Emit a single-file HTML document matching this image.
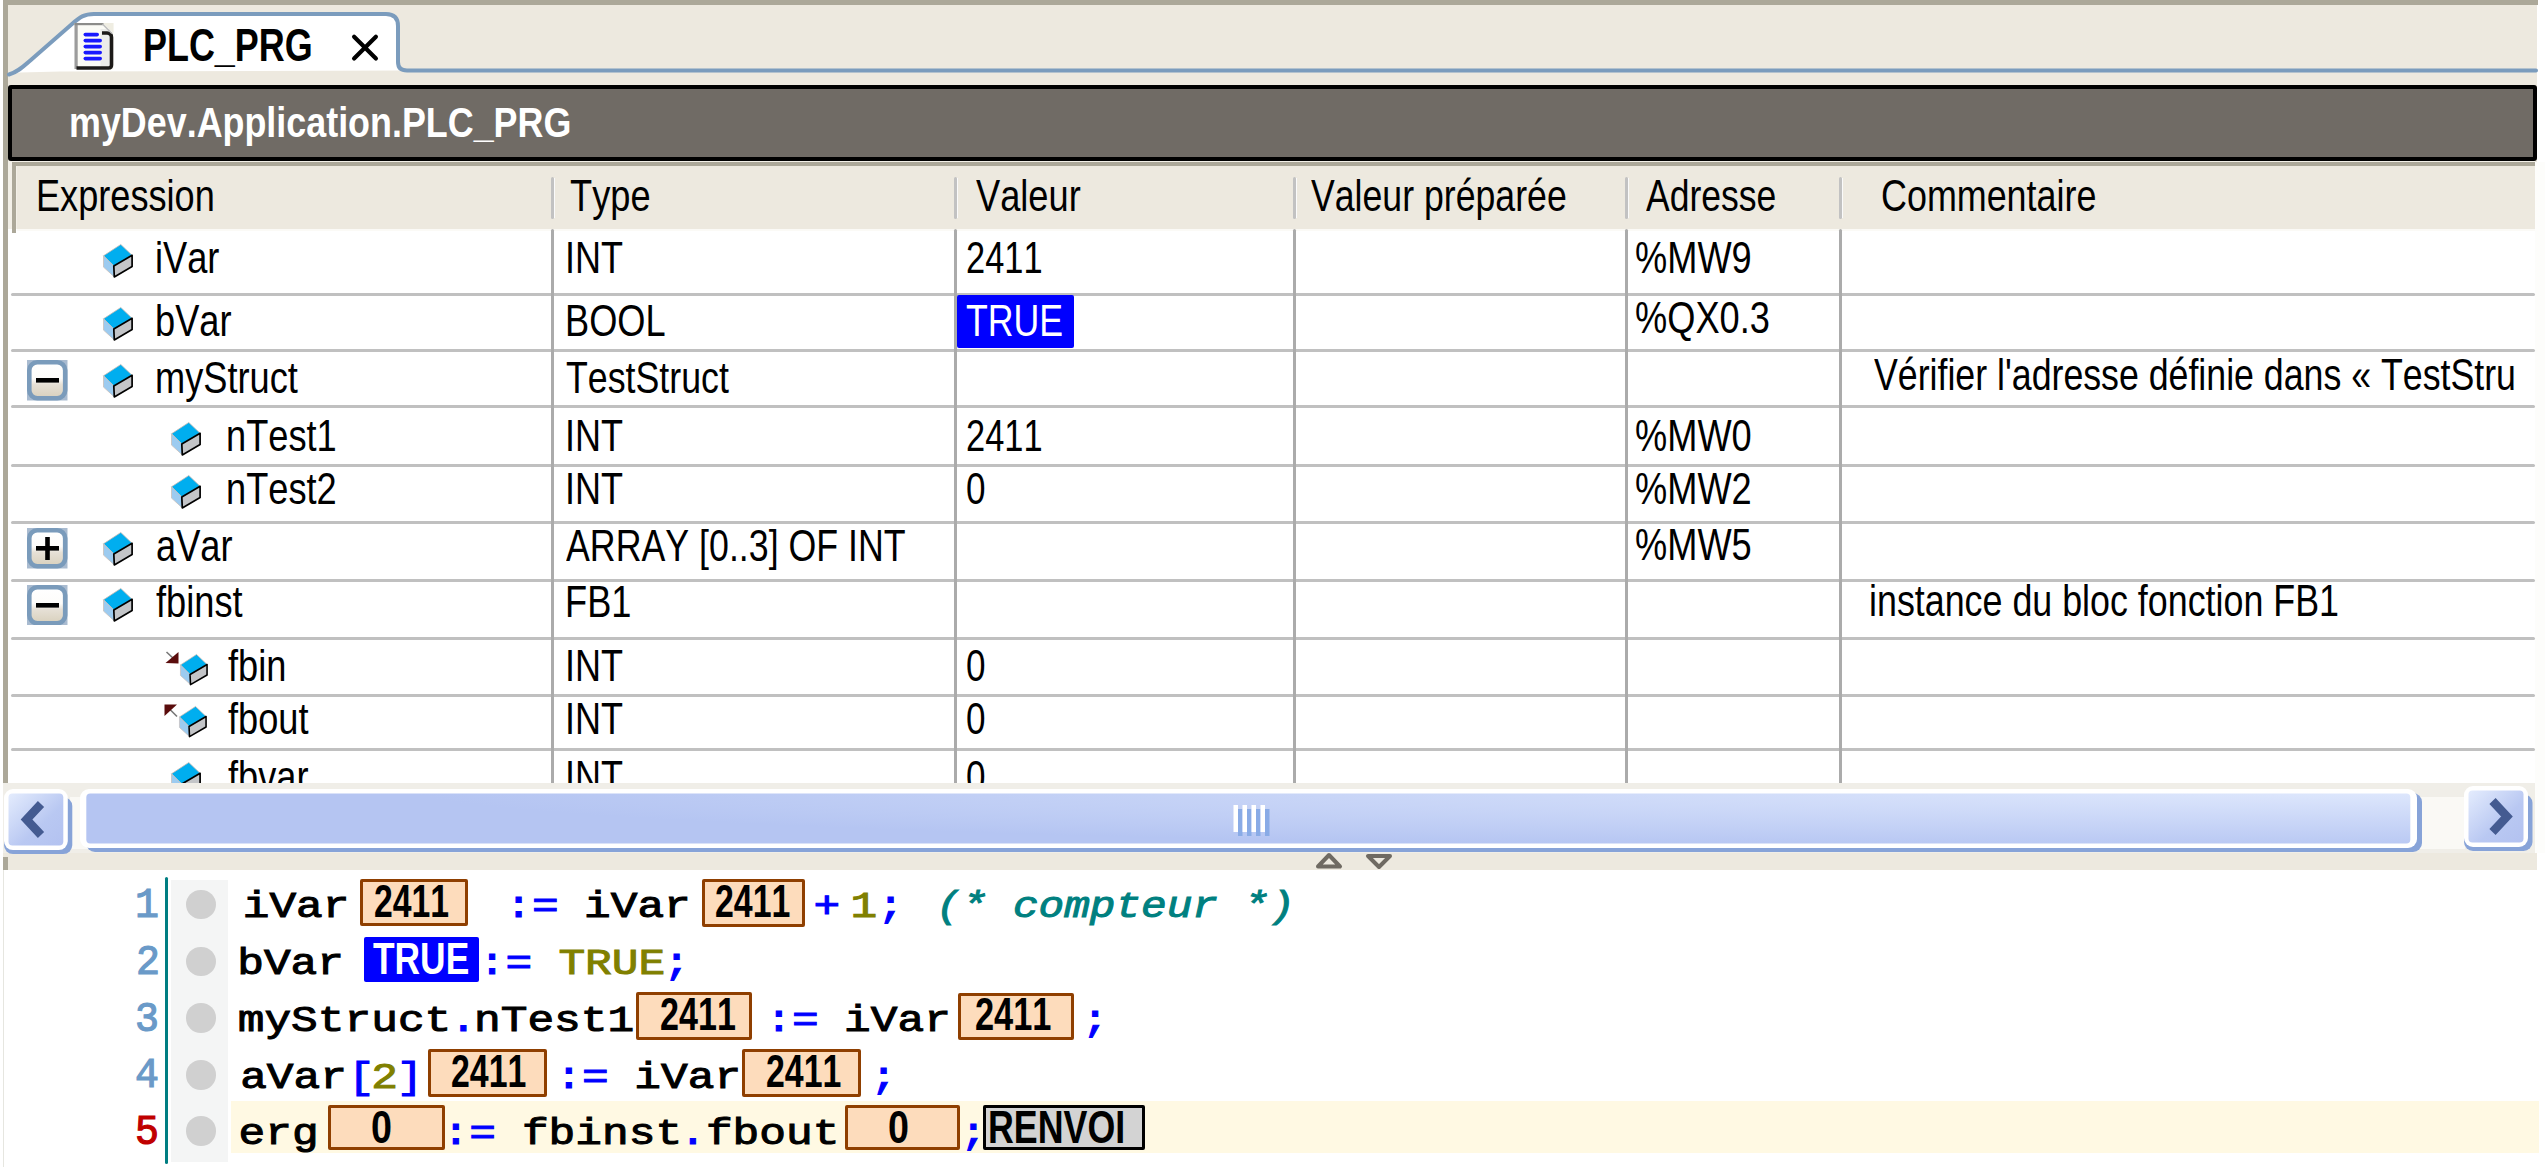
<!DOCTYPE html><html><head><meta charset="utf-8"><style>
html,body{margin:0;padding:0;width:2545px;height:1167px;overflow:hidden;background:#fff}
.t{position:absolute;white-space:pre;font-kerning:none}
</style></head><body>
<div style="position:absolute;left:0px;top:0px;width:2545px;height:1167px;background:#fff;z-index:0;"></div>
<div style="position:absolute;left:3px;top:0px;width:2534px;height:162px;background:#ede9df;z-index:0;"></div>
<div style="position:absolute;left:3px;top:162px;width:2532px;height:708px;background:#ede9df;z-index:0;"></div>
<div style="position:absolute;left:3px;top:0px;width:2535px;height:4.5px;background:#aca899;z-index:1;"></div>
<div style="position:absolute;left:3px;top:0px;width:4.5px;height:783px;background:#aca899;z-index:1;"></div>
<div style="position:absolute;left:3px;top:857px;width:4.5px;height:13px;background:#aca899;z-index:1;"></div>
<svg style="position:absolute;left:0;top:0;z-index:2" width="2545" height="90">
<path d="M9,74.5 C18,72 24,66 32,59 L72,24 C80,17 84,14 94,14 L386,14 Q398,14 398,26 L398,62 Q398,71 408,71 L400,70.6 L60,71.5 L20,72.5 L9,74.5 Z" fill="#fff"/>
<path d="M9,74.5 C18,72 24,66 32,59 L72,24 C80,17 84,14 94,14 L386,14 Q398,14 398,26 L398,62 Q398,70.5 407,70.5 L2536,70.5" fill="none" stroke="#7b9cbd" stroke-width="4" stroke-linecap="round"/>
<g transform="translate(74.5,23)">
 <rect x="0" y="0" width="39" height="46.5" fill="#fbfbf6"/>
 <rect x="26" y="6" width="10" height="38" fill="#ececea"/>
 <path d="M28,0 L39,0 L39,10 Z" fill="#efede2"/>
 <rect x="0" y="0" width="3.2" height="46" fill="#9c9c9c"/>
 <rect x="0" y="0" width="29" height="2.2" fill="#8c8c8a"/>
 <path d="M27.5,10 L32.5,10 Q37,10 37,14.5 L37,42 Q37,45 34,45 L2,45" fill="none" stroke="#1c1a18" stroke-width="3.6"/>
 <path d="M28,1 L37.5,10.5" stroke="#bdbdbd" stroke-width="1.5"/>
 <g fill="#1a1aff"><rect x="9" y="9.8" width="15.5" height="3.6" rx="1.8"/><rect x="9" y="15.8" width="18.5" height="3.6" rx="1.8"/><rect x="9" y="21.8" width="18.5" height="3.6" rx="1.8"/><rect x="9" y="27.8" width="18.5" height="3.6" rx="1.8"/><rect x="9" y="33.8" width="18.5" height="3.6" rx="1.8"/></g>
</g>
<path d="M354.1,36.7 L375.9,58.5 M375.9,36.7 L354.1,58.5" stroke="#000" stroke-width="4.2" stroke-linecap="round"/>
</svg>
<div style="position:absolute;left:7.5px;top:85px;width:2529.5px;height:76px;background:#706b65;z-index:2;border:4px solid #000;box-sizing:border-box;border-radius:3px"></div>
<div style="position:absolute;left:7.5px;top:161px;width:2527.5px;height:72px;background:#f3f0e8;z-index:1;"></div>
<div style="position:absolute;left:11.8px;top:162px;width:2523.2px;height:4.400000000000006px;background:#aca899;z-index:2;"></div>
<div style="position:absolute;left:11.8px;top:162px;width:4.699999999999999px;height:71px;background:#aca899;z-index:2;"></div>
<div style="position:absolute;left:16.5px;top:166.4px;width:2518.5px;height:62.599999999999994px;background:#ede9df;z-index:2;"></div>
<div style="position:absolute;left:551px;top:177px;width:3px;height:42px;background:#c2c2c2;border-radius:1.5px;z-index:3"></div>
<div style="position:absolute;left:554px;top:178px;width:1px;height:40px;background:#fafafa;z-index:3"></div>
<div style="position:absolute;left:954px;top:177px;width:3px;height:42px;background:#c2c2c2;border-radius:1.5px;z-index:3"></div>
<div style="position:absolute;left:957px;top:178px;width:1px;height:40px;background:#fafafa;z-index:3"></div>
<div style="position:absolute;left:1293px;top:177px;width:3px;height:42px;background:#c2c2c2;border-radius:1.5px;z-index:3"></div>
<div style="position:absolute;left:1296px;top:178px;width:1px;height:40px;background:#fafafa;z-index:3"></div>
<div style="position:absolute;left:1625.4px;top:177px;width:3px;height:42px;background:#c2c2c2;border-radius:1.5px;z-index:3"></div>
<div style="position:absolute;left:1628.4px;top:178px;width:1px;height:40px;background:#fafafa;z-index:3"></div>
<div style="position:absolute;left:1838.9px;top:177px;width:3px;height:42px;background:#c2c2c2;border-radius:1.5px;z-index:3"></div>
<div style="position:absolute;left:1841.9px;top:178px;width:1px;height:40px;background:#fafafa;z-index:3"></div>
<div style="position:absolute;left:7.5px;top:229px;width:2527.5px;height:554px;background:#fff;z-index:1;"></div>
<div style="position:absolute;left:16.5px;top:229px;width:2518.5px;height:2px;background:#fbfaf6;z-index:2;"></div>
<div style="position:absolute;left:551px;top:229px;width:3px;height:554px;background:#ababab;border-radius:1.5px 1.5px 0 0;z-index:3"></div>
<div style="position:absolute;left:954px;top:229px;width:3px;height:554px;background:#ababab;border-radius:1.5px 1.5px 0 0;z-index:3"></div>
<div style="position:absolute;left:1293px;top:229px;width:3px;height:554px;background:#ababab;border-radius:1.5px 1.5px 0 0;z-index:3"></div>
<div style="position:absolute;left:1625.4px;top:229px;width:3px;height:554px;background:#ababab;border-radius:1.5px 1.5px 0 0;z-index:3"></div>
<div style="position:absolute;left:1838.9px;top:229px;width:3px;height:554px;background:#ababab;border-radius:1.5px 1.5px 0 0;z-index:3"></div>
<div style="position:absolute;left:11px;top:292.5px;width:2524px;height:3px;background:#c0c0c0;border-radius:1.5px;z-index:2"></div>
<div style="position:absolute;left:11px;top:349px;width:2524px;height:3px;background:#c0c0c0;border-radius:1.5px;z-index:2"></div>
<div style="position:absolute;left:11px;top:405px;width:2524px;height:3px;background:#c0c0c0;border-radius:1.5px;z-index:2"></div>
<div style="position:absolute;left:11px;top:463.5px;width:2524px;height:3px;background:#c0c0c0;border-radius:1.5px;z-index:2"></div>
<div style="position:absolute;left:11px;top:520.5px;width:2524px;height:3px;background:#c0c0c0;border-radius:1.5px;z-index:2"></div>
<div style="position:absolute;left:11px;top:578.5px;width:2524px;height:3px;background:#c0c0c0;border-radius:1.5px;z-index:2"></div>
<div style="position:absolute;left:11px;top:636.5px;width:2524px;height:3px;background:#c0c0c0;border-radius:1.5px;z-index:2"></div>
<div style="position:absolute;left:11px;top:693.5px;width:2524px;height:3px;background:#c0c0c0;border-radius:1.5px;z-index:2"></div>
<div style="position:absolute;left:11px;top:748px;width:2524px;height:3px;background:#c0c0c0;border-radius:1.5px;z-index:2"></div>
<div style="position:absolute;left:957px;top:295.3px;width:117px;height:53.19999999999999px;background:#0000ff;z-index:4;border-radius:2px"></div>
<svg style="position:absolute;left:103.4px;top:244.2px;z-index:4;overflow:visible" width="30.0" height="34.0" viewBox="0 0 30 34">
<path d="M0.5,11.8 L17.8,0.5 L29.1,11.3 L10.8,22.1 Z" fill="#00aeef" stroke="#c9b9b0" stroke-width="0.8"/>
<path d="M0.5,11.8 L10.8,22.1 L11.3,32.9 L0.5,23.1 Z" fill="#9ccbf0" stroke="#c8c0bb" stroke-width="0.8"/>
<path d="M10.8,22.1 L29.1,11.3 L29.1,22.6 L11.3,32.9 Z" fill="#c3c5c8" stroke="#000" stroke-width="1.7" stroke-linejoin="round"/>
</svg>
<svg style="position:absolute;left:103.4px;top:307.1px;z-index:4;overflow:visible" width="30.0" height="34.0" viewBox="0 0 30 34">
<path d="M0.5,11.8 L17.8,0.5 L29.1,11.3 L10.8,22.1 Z" fill="#00aeef" stroke="#c9b9b0" stroke-width="0.8"/>
<path d="M0.5,11.8 L10.8,22.1 L11.3,32.9 L0.5,23.1 Z" fill="#9ccbf0" stroke="#c8c0bb" stroke-width="0.8"/>
<path d="M10.8,22.1 L29.1,11.3 L29.1,22.6 L11.3,32.9 Z" fill="#c3c5c8" stroke="#000" stroke-width="1.7" stroke-linejoin="round"/>
</svg>
<svg style="position:absolute;left:103.4px;top:364.1px;z-index:4;overflow:visible" width="30.0" height="34.0" viewBox="0 0 30 34">
<path d="M0.5,11.8 L17.8,0.5 L29.1,11.3 L10.8,22.1 Z" fill="#00aeef" stroke="#c9b9b0" stroke-width="0.8"/>
<path d="M0.5,11.8 L10.8,22.1 L11.3,32.9 L0.5,23.1 Z" fill="#9ccbf0" stroke="#c8c0bb" stroke-width="0.8"/>
<path d="M10.8,22.1 L29.1,11.3 L29.1,22.6 L11.3,32.9 Z" fill="#c3c5c8" stroke="#000" stroke-width="1.7" stroke-linejoin="round"/>
</svg>
<svg style="position:absolute;left:27px;top:360.3px;z-index:4" width="40.5" height="40.5" viewBox="0 0 40.5 40.5">
<defs><linearGradient id="eg360" x1="0" y1="0" x2="0" y2="1"><stop offset="0" stop-color="#fff"/><stop offset="0.45" stop-color="#fdfcfa"/><stop offset="0.62" stop-color="#e6e0d6"/><stop offset="1" stop-color="#d8d0bc"/></linearGradient></defs>
<rect x="0" y="0" width="40.5" height="40.5" fill="#a9bbd0"/>
<rect x="2.3" y="2.3" width="35.9" height="35.9" rx="8" fill="url(#eg360)" stroke="#7a9bbb" stroke-width="4.6"/>
<rect x="9" y="18" width="23" height="4.6" fill="#000"/></svg>
<svg style="position:absolute;left:171.4px;top:422.3px;z-index:4;overflow:visible" width="30.0" height="34.0" viewBox="0 0 30 34">
<path d="M0.5,11.8 L17.8,0.5 L29.1,11.3 L10.8,22.1 Z" fill="#00aeef" stroke="#c9b9b0" stroke-width="0.8"/>
<path d="M0.5,11.8 L10.8,22.1 L11.3,32.9 L0.5,23.1 Z" fill="#9ccbf0" stroke="#c8c0bb" stroke-width="0.8"/>
<path d="M10.8,22.1 L29.1,11.3 L29.1,22.6 L11.3,32.9 Z" fill="#c3c5c8" stroke="#000" stroke-width="1.7" stroke-linejoin="round"/>
</svg>
<svg style="position:absolute;left:171.4px;top:474.8px;z-index:4;overflow:visible" width="30.0" height="34.0" viewBox="0 0 30 34">
<path d="M0.5,11.8 L17.8,0.5 L29.1,11.3 L10.8,22.1 Z" fill="#00aeef" stroke="#c9b9b0" stroke-width="0.8"/>
<path d="M0.5,11.8 L10.8,22.1 L11.3,32.9 L0.5,23.1 Z" fill="#9ccbf0" stroke="#c8c0bb" stroke-width="0.8"/>
<path d="M10.8,22.1 L29.1,11.3 L29.1,22.6 L11.3,32.9 Z" fill="#c3c5c8" stroke="#000" stroke-width="1.7" stroke-linejoin="round"/>
</svg>
<svg style="position:absolute;left:103.4px;top:531.8px;z-index:4;overflow:visible" width="30.0" height="34.0" viewBox="0 0 30 34">
<path d="M0.5,11.8 L17.8,0.5 L29.1,11.3 L10.8,22.1 Z" fill="#00aeef" stroke="#c9b9b0" stroke-width="0.8"/>
<path d="M0.5,11.8 L10.8,22.1 L11.3,32.9 L0.5,23.1 Z" fill="#9ccbf0" stroke="#c8c0bb" stroke-width="0.8"/>
<path d="M10.8,22.1 L29.1,11.3 L29.1,22.6 L11.3,32.9 Z" fill="#c3c5c8" stroke="#000" stroke-width="1.7" stroke-linejoin="round"/>
</svg>
<svg style="position:absolute;left:27px;top:528.0px;z-index:4" width="40.5" height="40.5" viewBox="0 0 40.5 40.5">
<defs><linearGradient id="eg528" x1="0" y1="0" x2="0" y2="1"><stop offset="0" stop-color="#fff"/><stop offset="0.45" stop-color="#fdfcfa"/><stop offset="0.62" stop-color="#e6e0d6"/><stop offset="1" stop-color="#d8d0bc"/></linearGradient></defs>
<rect x="0" y="0" width="40.5" height="40.5" fill="#a9bbd0"/>
<rect x="2.3" y="2.3" width="35.9" height="35.9" rx="8" fill="url(#eg528)" stroke="#7a9bbb" stroke-width="4.6"/>
<rect x="9" y="18" width="23" height="4.6" fill="#000"/><rect x="18.2" y="9" width="4.6" height="23" fill="#000"/></svg>
<svg style="position:absolute;left:103.4px;top:588.3px;z-index:4;overflow:visible" width="30.0" height="34.0" viewBox="0 0 30 34">
<path d="M0.5,11.8 L17.8,0.5 L29.1,11.3 L10.8,22.1 Z" fill="#00aeef" stroke="#c9b9b0" stroke-width="0.8"/>
<path d="M0.5,11.8 L10.8,22.1 L11.3,32.9 L0.5,23.1 Z" fill="#9ccbf0" stroke="#c8c0bb" stroke-width="0.8"/>
<path d="M10.8,22.1 L29.1,11.3 L29.1,22.6 L11.3,32.9 Z" fill="#c3c5c8" stroke="#000" stroke-width="1.7" stroke-linejoin="round"/>
</svg>
<svg style="position:absolute;left:27px;top:584.5px;z-index:4" width="40.5" height="40.5" viewBox="0 0 40.5 40.5">
<defs><linearGradient id="eg584" x1="0" y1="0" x2="0" y2="1"><stop offset="0" stop-color="#fff"/><stop offset="0.45" stop-color="#fdfcfa"/><stop offset="0.62" stop-color="#e6e0d6"/><stop offset="1" stop-color="#d8d0bc"/></linearGradient></defs>
<rect x="0" y="0" width="40.5" height="40.5" fill="#a9bbd0"/>
<rect x="2.3" y="2.3" width="35.9" height="35.9" rx="8" fill="url(#eg584)" stroke="#7a9bbb" stroke-width="4.6"/>
<rect x="9" y="18" width="23" height="4.6" fill="#000"/></svg>
<svg style="position:absolute;left:179.7px;top:653.7px;z-index:4;overflow:visible" width="27.900000000000002" height="31.62" viewBox="0 0 30 34">
<path d="M0.5,11.8 L17.8,0.5 L29.1,11.3 L10.8,22.1 Z" fill="#00aeef" stroke="#c9b9b0" stroke-width="0.8"/>
<path d="M0.5,11.8 L10.8,22.1 L11.3,32.9 L0.5,23.1 Z" fill="#9ccbf0" stroke="#c8c0bb" stroke-width="0.8"/>
<path d="M10.8,22.1 L29.1,11.3 L29.1,22.6 L11.3,32.9 Z" fill="#c3c5c8" stroke="#000" stroke-width="1.7" stroke-linejoin="round"/>
</svg>
<svg style="position:absolute;left:164.5px;top:650.5px;z-index:5" width="16" height="14" viewBox="0 0 16 14">
<path d="M1.5,1 L9,8" stroke="#777" stroke-width="1.6"/><path d="M0.5,12 L13.5,1 L13.5,12.5 Z" fill="#5a0c0c"/></svg>
<svg style="position:absolute;left:178.6px;top:706.4px;z-index:4;overflow:visible" width="27.900000000000002" height="31.62" viewBox="0 0 30 34">
<path d="M0.5,11.8 L17.8,0.5 L29.1,11.3 L10.8,22.1 Z" fill="#00aeef" stroke="#c9b9b0" stroke-width="0.8"/>
<path d="M0.5,11.8 L10.8,22.1 L11.3,32.9 L0.5,23.1 Z" fill="#9ccbf0" stroke="#c8c0bb" stroke-width="0.8"/>
<path d="M10.8,22.1 L29.1,11.3 L29.1,22.6 L11.3,32.9 Z" fill="#c3c5c8" stroke="#000" stroke-width="1.7" stroke-linejoin="round"/>
</svg>
<svg style="position:absolute;left:163.5px;top:703.5px;z-index:5" width="16" height="14" viewBox="0 0 16 14">
<path d="M6,5.5 L13,12.5" stroke="#777" stroke-width="1.6"/><path d="M0.5,0.5 L13,0.5 L0.5,12 Z" fill="#5a0c0c"/></svg>
<svg style="position:absolute;left:171.4px;top:762.0px;z-index:4;overflow:visible" width="30.0" height="34.0" viewBox="0 0 30 34">
<path d="M0.5,11.8 L17.8,0.5 L29.1,11.3 L10.8,22.1 Z" fill="#00aeef" stroke="#c9b9b0" stroke-width="0.8"/>
<path d="M0.5,11.8 L10.8,22.1 L11.3,32.9 L0.5,23.1 Z" fill="#9ccbf0" stroke="#c8c0bb" stroke-width="0.8"/>
<path d="M10.8,22.1 L29.1,11.3 L29.1,22.6 L11.3,32.9 Z" fill="#c3c5c8" stroke="#000" stroke-width="1.7" stroke-linejoin="round"/>
</svg>
<div style="position:absolute;left:3px;top:783px;width:2532px;height:70px;background:#f0eee8;z-index:8;"></div>
<div style="position:absolute;left:70px;top:797px;width:2395px;height:52px;background:#faf9f5;z-index:8;"></div>
<div style="position:absolute;left:7.5px;top:853px;width:2529.5px;height:17px;background:#ede9df;z-index:8;"></div>
<div style="position:absolute;left:2535px;top:162px;width:10px;height:691px;background:#fdfdfb;z-index:0;"></div>
<div style="position:absolute;left:3px;top:857px;width:4.5px;height:13px;background:#aca899;z-index:9;"></div>
<svg style="position:absolute;left:3.6px;top:788.5px;z-index:9;overflow:visible" width="63.800000000000004" height="61.10000000000002" viewBox="0 0 63.800000000000004 61.10000000000002">
<defs><linearGradient id="bg3" x1="0" y1="0" x2="1" y2="1"><stop offset="0" stop-color="#e4ecfd"/><stop offset="0.6" stop-color="#b9c8f2"/><stop offset="1" stop-color="#b3c2f0"/></linearGradient></defs>
<rect x="0" y="8" width="68.30000000000001" height="57.10000000000002" rx="9" fill="#87a3d8"/>
<rect x="0" y="0" width="63.800000000000004" height="61.10000000000002" rx="9" fill="#fff"/>
<rect x="4.5" y="4.5" width="54.800000000000004" height="52.10000000000002" rx="4" fill="url(#bg3)"/>
<path d="M37,15 L22.5,30.5 L37,46" fill="none" stroke="#445b91" stroke-width="8.5" stroke-linecap="butt" stroke-linejoin="miter"/></svg>
<svg style="position:absolute;left:2464px;top:786px;z-index:9;overflow:visible" width="64" height="61" viewBox="0 0 64 61">
<defs><linearGradient id="bg2464" x1="0" y1="0" x2="1" y2="1"><stop offset="0" stop-color="#e4ecfd"/><stop offset="0.6" stop-color="#b9c8f2"/><stop offset="1" stop-color="#b3c2f0"/></linearGradient></defs>
<rect x="0" y="8" width="68.5" height="57" rx="9" fill="#87a3d8"/>
<rect x="0" y="0" width="64" height="61" rx="9" fill="#fff"/>
<rect x="4.5" y="4.5" width="55" height="52" rx="4" fill="url(#bg2464)"/>
<path d="M28.5,15 L43,30.5 L28.5,46" fill="none" stroke="#445b91" stroke-width="8.5" stroke-linecap="butt" stroke-linejoin="miter"/></svg>
<svg style="position:absolute;left:79.6px;top:788.6px;z-index:9;overflow:visible" width="2337" height="60" viewBox="0 0 2337 60">
<defs><radialGradient id="thg" gradientUnits="userSpaceOnUse" cx="0" cy="0" r="1" gradientTransform="translate(2330,0) scale(2000,62)"><stop offset="0" stop-color="#e0e9fd"/><stop offset="1" stop-color="#b5c5f2"/></radialGradient></defs>
<rect x="6" y="4" width="2336" height="59" rx="9" fill="#87a3d8"/>
<rect x="0" y="0" width="2337" height="59" rx="9" fill="#fff"/>
<rect x="6.3" y="4.4" width="2324" height="50" rx="4" fill="url(#thg)"/>
<g fill="#89abe6"><rect x="1158" y="20" width="4.5" height="27"/><rect x="1167" y="20" width="4.5" height="27"/><rect x="1176" y="20" width="4.5" height="27"/><rect x="1185" y="20" width="4.5" height="27"/></g>
<g fill="#fff"><rect x="1153.5" y="16" width="4.5" height="27"/><rect x="1162.5" y="16" width="4.5" height="27"/><rect x="1171.5" y="16" width="4.5" height="27"/><rect x="1180.5" y="16" width="4.5" height="27"/></g>
</svg>
<svg style="position:absolute;left:1300px;top:850px;z-index:9" width="110" height="20" viewBox="0 0 110 20">
<path d="M18,16.5 L29,5 L40,16.5 Z" fill="none" stroke="#6f6a62" stroke-width="4" stroke-linejoin="round"/>
<path d="M68,6 L90,6 L79,17 Z" fill="none" stroke="#6f6a62" stroke-width="4" stroke-linejoin="round"/>
</svg>
<div style="position:absolute;left:0px;top:870px;width:2545px;height:297px;background:#fff;z-index:1;"></div>
<div style="position:absolute;left:2.5px;top:870px;width:1.0px;height:297px;background:#e6e6e0;z-index:2;"></div>
<div style="position:absolute;left:164.5px;top:877.2px;width:3.9000000000000057px;height:287.20000000000005px;background:#007e82;z-index:3;border-radius:2px"></div>
<div style="position:absolute;left:171px;top:880px;width:56.69999999999999px;height:282.29999999999995px;background:#f4f5f5;z-index:2;"></div>
<div style="position:absolute;left:186.2px;top:889.6px;width:29.6px;height:29.6px;border-radius:50%;background:#d0d0d0;z-index:3"></div>
<div style="position:absolute;left:186.2px;top:946.5px;width:29.6px;height:29.6px;border-radius:50%;background:#d0d0d0;z-index:3"></div>
<div style="position:absolute;left:186.2px;top:1003.2px;width:29.6px;height:29.6px;border-radius:50%;background:#d0d0d0;z-index:3"></div>
<div style="position:absolute;left:186.2px;top:1060.2px;width:29.6px;height:29.6px;border-radius:50%;background:#d0d0d0;z-index:3"></div>
<div style="position:absolute;left:186.2px;top:1116.2px;width:29.6px;height:29.6px;border-radius:50%;background:#d0d0d0;z-index:3"></div>
<div style="position:absolute;left:231px;top:1101.2px;width:2308px;height:51.899999999999864px;background:#fff9e3;z-index:2;"></div>
<div style="position:absolute;left:360.3px;top:879.2px;width:107.5px;height:47.19999999999993px;background:#fddcbc;border:3px solid #8f3f00;box-sizing:border-box;border-radius:2px;z-index:6"></div>
<div style="position:absolute;left:701.7px;top:879.0px;width:103.29999999999995px;height:47.5px;background:#fddcbc;border:3px solid #8f3f00;box-sizing:border-box;border-radius:2px;z-index:6"></div>
<div style="position:absolute;left:636.4px;top:991.7px;width:115.80000000000007px;height:48.09999999999991px;background:#fddcbc;border:3px solid #8f3f00;box-sizing:border-box;border-radius:2px;z-index:6"></div>
<div style="position:absolute;left:957.6px;top:993.0px;width:115.99999999999989px;height:46.5px;background:#fddcbc;border:3px solid #8f3f00;box-sizing:border-box;border-radius:2px;z-index:6"></div>
<div style="position:absolute;left:427.7px;top:1048.8px;width:119.40000000000003px;height:47.799999999999955px;background:#fddcbc;border:3px solid #8f3f00;box-sizing:border-box;border-radius:2px;z-index:6"></div>
<div style="position:absolute;left:741.6px;top:1048.8px;width:119.39999999999998px;height:47.799999999999955px;background:#fddcbc;border:3px solid #8f3f00;box-sizing:border-box;border-radius:2px;z-index:6"></div>
<div style="position:absolute;left:328.4px;top:1105.3px;width:116.40000000000003px;height:45.100000000000136px;background:#fddcbc;border:3px solid #8f3f00;box-sizing:border-box;border-radius:2px;z-index:6"></div>
<div style="position:absolute;left:844.9px;top:1105.3px;width:115.20000000000005px;height:45.100000000000136px;background:#fddcbc;border:3px solid #8f3f00;box-sizing:border-box;border-radius:2px;z-index:6"></div>
<div style="position:absolute;left:364.4px;top:936.7px;width:114.30000000000001px;height:45.299999999999955px;background:#0000ff;z-index:6;border-radius:2px"></div>
<div style="position:absolute;left:982.8px;top:1104.8px;width:161.9px;height:45.6px;background:#d3d3d3;border:3.5px solid #000;box-sizing:border-box;border-radius:2px;z-index:6"></div>
<div class="t" style="left:142.89px;top:21.50px;font-family:'Liberation Sans',sans-serif;font-weight:700;font-style:normal;font-size:46px;line-height:46px;color:#000;transform:scaleX(0.7810);transform-origin:0 0;z-index:5;">PLC_PRG</div>
<div class="t" style="left:69.39px;top:102.18px;font-family:'Liberation Sans',sans-serif;font-weight:700;font-style:normal;font-size:42.5px;line-height:42.5px;color:#fff;transform:scaleX(0.8441);transform-origin:0 0;z-index:5;">myDev.Application.PLC_PRG</div>
<div class="t" style="left:36.41px;top:172.75px;font-family:'Liberation Sans',sans-serif;font-weight:400;font-style:normal;font-size:45px;line-height:45px;color:#000;transform:scaleX(0.8032);transform-origin:0 0;z-index:5;">Expression</div>
<div class="t" style="left:570.18px;top:172.75px;font-family:'Liberation Sans',sans-serif;font-weight:400;font-style:normal;font-size:45px;line-height:45px;color:#000;transform:scaleX(0.8050);transform-origin:0 0;z-index:5;">Type</div>
<div class="t" style="left:976.14px;top:172.75px;font-family:'Liberation Sans',sans-serif;font-weight:400;font-style:normal;font-size:45px;line-height:45px;color:#000;transform:scaleX(0.8050);transform-origin:0 0;z-index:5;">Valeur</div>
<div class="t" style="left:1311.34px;top:172.75px;font-family:'Liberation Sans',sans-serif;font-weight:400;font-style:normal;font-size:45px;line-height:45px;color:#000;transform:scaleX(0.7924);transform-origin:0 0;z-index:5;">Valeur préparée</div>
<div class="t" style="left:1645.70px;top:172.75px;font-family:'Liberation Sans',sans-serif;font-weight:400;font-style:normal;font-size:45px;line-height:45px;color:#000;transform:scaleX(0.7894);transform-origin:0 0;z-index:5;">Adresse</div>
<div class="t" style="left:1881.11px;top:172.75px;font-family:'Liberation Sans',sans-serif;font-weight:400;font-style:normal;font-size:45px;line-height:45px;color:#000;transform:scaleX(0.7975);transform-origin:0 0;z-index:5;">Commentaire</div>
<div class="t" style="left:155.36px;top:235.15px;font-family:'Liberation Sans',sans-serif;font-weight:400;font-style:normal;font-size:45px;line-height:45px;color:#000;transform:scaleX(0.8050);transform-origin:0 0;z-index:3;">iVar</div>
<div class="t" style="left:565.36px;top:235.15px;font-family:'Liberation Sans',sans-serif;font-weight:400;font-style:normal;font-size:45px;line-height:45px;color:#000;transform:scaleX(0.8000);transform-origin:0 0;z-index:3;">INT</div>
<div class="t" style="left:965.78px;top:235.15px;font-family:'Liberation Sans',sans-serif;font-weight:400;font-style:normal;font-size:45px;line-height:45px;color:#000;transform:scaleX(0.7650);transform-origin:0 0;z-index:3;">2411</div>
<div class="t" style="left:1635.25px;top:235.15px;font-family:'Liberation Sans',sans-serif;font-weight:400;font-style:normal;font-size:45px;line-height:45px;color:#000;transform:scaleX(0.8050);transform-origin:0 0;z-index:3;">%MW9</div>
<div class="t" style="left:155.36px;top:298.05px;font-family:'Liberation Sans',sans-serif;font-weight:400;font-style:normal;font-size:45px;line-height:45px;color:#000;transform:scaleX(0.8050);transform-origin:0 0;z-index:3;">bVar</div>
<div class="t" style="left:564.60px;top:298.05px;font-family:'Liberation Sans',sans-serif;font-weight:400;font-style:normal;font-size:45px;line-height:45px;color:#000;transform:scaleX(0.8050);transform-origin:0 0;z-index:3;">BOOL</div>
<div class="t" style="left:966.29px;top:298.05px;font-family:'Liberation Sans',sans-serif;font-weight:400;font-style:normal;font-size:45px;line-height:45px;color:#fff;transform:scaleX(0.7928);transform-origin:0 0;z-index:6;">TRUE</div>
<div class="t" style="left:1635.25px;top:294.75px;font-family:'Liberation Sans',sans-serif;font-weight:400;font-style:normal;font-size:45px;line-height:45px;color:#000;transform:scaleX(0.8050);transform-origin:0 0;z-index:3;">%QX0.3</div>
<div class="t" style="left:155.36px;top:355.05px;font-family:'Liberation Sans',sans-serif;font-weight:400;font-style:normal;font-size:45px;line-height:45px;color:#000;transform:scaleX(0.8050);transform-origin:0 0;z-index:3;">myStruct</div>
<div class="t" style="left:565.69px;top:355.05px;font-family:'Liberation Sans',sans-serif;font-weight:400;font-style:normal;font-size:45px;line-height:45px;color:#000;transform:scaleX(0.7942);transform-origin:0 0;z-index:3;">TestStruct</div>
<div class="t" style="left:1874.44px;top:352.15px;font-family:'Liberation Sans',sans-serif;font-weight:400;font-style:normal;font-size:45px;line-height:45px;color:#000;transform:scaleX(0.7935);transform-origin:0 0;z-index:3;">Vérifier l'adresse définie dans « TestStru</div>
<div class="t" style="left:226.06px;top:413.25px;font-family:'Liberation Sans',sans-serif;font-weight:400;font-style:normal;font-size:45px;line-height:45px;color:#000;transform:scaleX(0.8050);transform-origin:0 0;z-index:3;">nTest1</div>
<div class="t" style="left:565.36px;top:413.25px;font-family:'Liberation Sans',sans-serif;font-weight:400;font-style:normal;font-size:45px;line-height:45px;color:#000;transform:scaleX(0.8000);transform-origin:0 0;z-index:3;">INT</div>
<div class="t" style="left:965.78px;top:413.25px;font-family:'Liberation Sans',sans-serif;font-weight:400;font-style:normal;font-size:45px;line-height:45px;color:#000;transform:scaleX(0.7650);transform-origin:0 0;z-index:3;">2411</div>
<div class="t" style="left:1635.25px;top:413.25px;font-family:'Liberation Sans',sans-serif;font-weight:400;font-style:normal;font-size:45px;line-height:45px;color:#000;transform:scaleX(0.8050);transform-origin:0 0;z-index:3;">%MW0</div>
<div class="t" style="left:226.06px;top:465.75px;font-family:'Liberation Sans',sans-serif;font-weight:400;font-style:normal;font-size:45px;line-height:45px;color:#000;transform:scaleX(0.8050);transform-origin:0 0;z-index:3;">nTest2</div>
<div class="t" style="left:565.36px;top:465.75px;font-family:'Liberation Sans',sans-serif;font-weight:400;font-style:normal;font-size:45px;line-height:45px;color:#000;transform:scaleX(0.8000);transform-origin:0 0;z-index:3;">INT</div>
<div class="t" style="left:966.10px;top:465.75px;font-family:'Liberation Sans',sans-serif;font-weight:400;font-style:normal;font-size:45px;line-height:45px;color:#000;transform:scaleX(0.7800);transform-origin:0 0;z-index:3;">0</div>
<div class="t" style="left:1635.25px;top:465.65px;font-family:'Liberation Sans',sans-serif;font-weight:400;font-style:normal;font-size:45px;line-height:45px;color:#000;transform:scaleX(0.8050);transform-origin:0 0;z-index:3;">%MW2</div>
<div class="t" style="left:156.45px;top:522.75px;font-family:'Liberation Sans',sans-serif;font-weight:400;font-style:normal;font-size:45px;line-height:45px;color:#000;transform:scaleX(0.8050);transform-origin:0 0;z-index:3;">aVar</div>
<div class="t" style="left:565.80px;top:522.75px;font-family:'Liberation Sans',sans-serif;font-weight:400;font-style:normal;font-size:45px;line-height:45px;color:#000;transform:scaleX(0.7944);transform-origin:0 0;z-index:3;">ARRAY [0..3] OF INT</div>
<div class="t" style="left:1635.25px;top:521.95px;font-family:'Liberation Sans',sans-serif;font-weight:400;font-style:normal;font-size:45px;line-height:45px;color:#000;transform:scaleX(0.8050);transform-origin:0 0;z-index:3;">%MW5</div>
<div class="t" style="left:155.84px;top:579.25px;font-family:'Liberation Sans',sans-serif;font-weight:400;font-style:normal;font-size:45px;line-height:45px;color:#000;transform:scaleX(0.8050);transform-origin:0 0;z-index:3;">fbinst</div>
<div class="t" style="left:564.60px;top:579.25px;font-family:'Liberation Sans',sans-serif;font-weight:400;font-style:normal;font-size:45px;line-height:45px;color:#000;transform:scaleX(0.8050);transform-origin:0 0;z-index:3;">FB1</div>
<div class="t" style="left:1868.99px;top:578.15px;font-family:'Liberation Sans',sans-serif;font-weight:400;font-style:normal;font-size:45px;line-height:45px;color:#000;transform:scaleX(0.7961);transform-origin:0 0;z-index:3;">instance du bloc fonction FB1</div>
<div class="t" style="left:228.24px;top:642.75px;font-family:'Liberation Sans',sans-serif;font-weight:400;font-style:normal;font-size:45px;line-height:45px;color:#000;transform:scaleX(0.8050);transform-origin:0 0;z-index:3;">fbin</div>
<div class="t" style="left:565.36px;top:642.75px;font-family:'Liberation Sans',sans-serif;font-weight:400;font-style:normal;font-size:45px;line-height:45px;color:#000;transform:scaleX(0.8000);transform-origin:0 0;z-index:3;">INT</div>
<div class="t" style="left:966.10px;top:642.75px;font-family:'Liberation Sans',sans-serif;font-weight:400;font-style:normal;font-size:45px;line-height:45px;color:#000;transform:scaleX(0.7800);transform-origin:0 0;z-index:3;">0</div>
<div class="t" style="left:228.24px;top:695.75px;font-family:'Liberation Sans',sans-serif;font-weight:400;font-style:normal;font-size:45px;line-height:45px;color:#000;transform:scaleX(0.8050);transform-origin:0 0;z-index:3;">fbout</div>
<div class="t" style="left:565.36px;top:695.75px;font-family:'Liberation Sans',sans-serif;font-weight:400;font-style:normal;font-size:45px;line-height:45px;color:#000;transform:scaleX(0.8000);transform-origin:0 0;z-index:3;">INT</div>
<div class="t" style="left:966.10px;top:695.75px;font-family:'Liberation Sans',sans-serif;font-weight:400;font-style:normal;font-size:45px;line-height:45px;color:#000;transform:scaleX(0.7800);transform-origin:0 0;z-index:3;">0</div>
<div class="t" style="left:228.24px;top:754.25px;font-family:'Liberation Sans',sans-serif;font-weight:400;font-style:normal;font-size:45px;line-height:45px;color:#000;transform:scaleX(0.8050);transform-origin:0 0;z-index:3;">fbvar</div>
<div class="t" style="left:565.36px;top:754.25px;font-family:'Liberation Sans',sans-serif;font-weight:400;font-style:normal;font-size:45px;line-height:45px;color:#000;transform:scaleX(0.8000);transform-origin:0 0;z-index:3;">INT</div>
<div class="t" style="left:966.10px;top:754.25px;font-family:'Liberation Sans',sans-serif;font-weight:400;font-style:normal;font-size:45px;line-height:45px;color:#000;transform:scaleX(0.7800);transform-origin:0 0;z-index:3;">0</div>
<div class="t" style="left:134.86px;top:885.08px;font-family:'Liberation Mono',monospace;font-weight:400;font-style:normal;font-size:42px;line-height:42px;color:#6a9ac8;transform:scaleX(0.9500);transform-origin:0 0;z-index:5;-webkit-text-stroke:1.2px #6a9ac8">1</div>
<div class="t" style="left:135.65px;top:941.78px;font-family:'Liberation Mono',monospace;font-weight:400;font-style:normal;font-size:42px;line-height:42px;color:#6a9ac8;transform:scaleX(0.9500);transform-origin:0 0;z-index:5;-webkit-text-stroke:1.2px #6a9ac8">2</div>
<div class="t" style="left:135.25px;top:998.88px;font-family:'Liberation Mono',monospace;font-weight:400;font-style:normal;font-size:42px;line-height:42px;color:#6a9ac8;transform:scaleX(0.9500);transform-origin:0 0;z-index:5;-webkit-text-stroke:1.2px #6a9ac8">3</div>
<div class="t" style="left:134.86px;top:1055.48px;font-family:'Liberation Mono',monospace;font-weight:400;font-style:normal;font-size:42px;line-height:42px;color:#6a9ac8;transform:scaleX(0.9500);transform-origin:0 0;z-index:5;-webkit-text-stroke:1.2px #6a9ac8">4</div>
<div class="t" style="left:135.25px;top:1111.68px;font-family:'Liberation Mono',monospace;font-weight:400;font-style:normal;font-size:42px;line-height:42px;color:#c00000;transform:scaleX(0.9500);transform-origin:0 0;z-index:5;-webkit-text-stroke:1.2px #c00000">5</div>
<div class="t" style="left:242.69px;top:883.38px;font-family:'Liberation Mono',monospace;font-weight:400;font-style:normal;font-size:44.5px;line-height:44.5px;color:#000;transform:scale(1.0000,0.84);transform-origin:0 33.82px;z-index:5;-webkit-text-stroke:1.2px #000">iVar</div>
<div class="t" style="left:505.22px;top:883.38px;font-family:'Liberation Mono',monospace;font-weight:400;font-style:normal;font-size:44.5px;line-height:44.5px;color:#0000ff;transform:scale(1.0000,0.84);transform-origin:0 33.82px;z-index:5;-webkit-text-stroke:1.2px #0000ff">:=</div>
<div class="t" style="left:583.99px;top:883.38px;font-family:'Liberation Mono',monospace;font-weight:400;font-style:normal;font-size:44.5px;line-height:44.5px;color:#000;transform:scale(1.0000,0.84);transform-origin:0 33.82px;z-index:5;-webkit-text-stroke:1.2px #000">iVar</div>
<div class="t" style="left:813.53px;top:883.38px;font-family:'Liberation Mono',monospace;font-weight:400;font-style:normal;font-size:44.5px;line-height:44.5px;color:#0000ff;transform:scale(1.0000,0.84);transform-origin:0 33.82px;z-index:5;-webkit-text-stroke:1.2px #0000ff">+</div>
<div class="t" style="left:850.59px;top:883.38px;font-family:'Liberation Mono',monospace;font-weight:400;font-style:normal;font-size:44.5px;line-height:44.5px;color:#808000;transform:scale(1.0000,0.84);transform-origin:0 33.82px;z-index:5;-webkit-text-stroke:1.2px #808000">1</div>
<div class="t" style="left:877.33px;top:883.38px;font-family:'Liberation Mono',monospace;font-weight:400;font-style:normal;font-size:44.5px;line-height:44.5px;color:#0000ff;transform:scale(1.0000,0.84);transform-origin:0 33.82px;z-index:5;-webkit-text-stroke:1.2px #0000ff">;</div>
<div class="t" style="left:935.69px;top:883.38px;font-family:'Liberation Mono',monospace;font-weight:400;font-style:italic;font-size:44.5px;line-height:44.5px;color:#008080;transform:scale(0.9596,0.84);transform-origin:0 33.82px;z-index:5;-webkit-text-stroke:1.2px #008080">(* compteur *)</div>
<div class="t" style="left:237.19px;top:940.08px;font-family:'Liberation Mono',monospace;font-weight:400;font-style:normal;font-size:44.5px;line-height:44.5px;color:#000;transform:scale(1.0000,0.84);transform-origin:0 33.82px;z-index:5;-webkit-text-stroke:1.2px #000">bVar</div>
<div class="t" style="left:478.82px;top:940.08px;font-family:'Liberation Mono',monospace;font-weight:400;font-style:normal;font-size:44.5px;line-height:44.5px;color:#0000ff;transform:scale(1.0000,0.84);transform-origin:0 33.82px;z-index:5;-webkit-text-stroke:1.2px #0000ff">:=</div>
<div class="t" style="left:558.42px;top:940.08px;font-family:'Liberation Mono',monospace;font-weight:400;font-style:normal;font-size:44.5px;line-height:44.5px;color:#808000;transform:scale(1.0000,0.84);transform-origin:0 33.82px;z-index:5;-webkit-text-stroke:1.2px #808000">TRUE</div>
<div class="t" style="left:663.33px;top:940.08px;font-family:'Liberation Mono',monospace;font-weight:400;font-style:normal;font-size:44.5px;line-height:44.5px;color:#0000ff;transform:scale(1.0000,0.84);transform-origin:0 33.82px;z-index:5;-webkit-text-stroke:1.2px #0000ff">;</div>
<div class="t" style="left:237.68px;top:997.18px;font-family:'Liberation Mono',monospace;font-weight:400;font-style:normal;font-size:44.5px;line-height:44.5px;color:#000;transform:scale(1.0000,0.84);transform-origin:0 33.82px;z-index:5;-webkit-text-stroke:1.2px #000">myStruct</div>
<div class="t" style="left:450.12px;top:997.18px;font-family:'Liberation Mono',monospace;font-weight:400;font-style:normal;font-size:44.5px;line-height:44.5px;color:#0000ff;transform:scale(1.0000,0.84);transform-origin:0 33.82px;z-index:5;-webkit-text-stroke:1.2px #0000ff">.</div>
<div class="t" style="left:474.00px;top:997.18px;font-family:'Liberation Mono',monospace;font-weight:400;font-style:normal;font-size:44.5px;line-height:44.5px;color:#000;transform:scale(1.0000,0.84);transform-origin:0 33.82px;z-index:5;-webkit-text-stroke:1.2px #000">nTest1</div>
<div class="t" style="left:765.42px;top:997.18px;font-family:'Liberation Mono',monospace;font-weight:400;font-style:normal;font-size:44.5px;line-height:44.5px;color:#0000ff;transform:scale(1.0000,0.84);transform-origin:0 33.82px;z-index:5;-webkit-text-stroke:1.2px #0000ff">:=</div>
<div class="t" style="left:844.09px;top:997.18px;font-family:'Liberation Mono',monospace;font-weight:400;font-style:normal;font-size:44.5px;line-height:44.5px;color:#000;transform:scale(1.0000,0.84);transform-origin:0 33.82px;z-index:5;-webkit-text-stroke:1.2px #000">iVar</div>
<div class="t" style="left:1081.84px;top:997.18px;font-family:'Liberation Mono',monospace;font-weight:400;font-style:normal;font-size:44.5px;line-height:44.5px;color:#0000ff;transform:scale(1.0000,0.84);transform-origin:0 33.82px;z-index:5;-webkit-text-stroke:1.2px #0000ff">;</div>
<div class="t" style="left:240.13px;top:1053.78px;font-family:'Liberation Mono',monospace;font-weight:400;font-style:normal;font-size:44.5px;line-height:44.5px;color:#000;transform:scale(1.0000,0.84);transform-origin:0 33.82px;z-index:5;-webkit-text-stroke:1.2px #000">aVar</div>
<div class="t" style="left:348.00px;top:1053.78px;font-family:'Liberation Mono',monospace;font-weight:400;font-style:normal;font-size:44.5px;line-height:44.5px;color:#0000ff;transform:scale(1.0000,0.84);transform-origin:0 33.82px;z-index:5;-webkit-text-stroke:1.2px #0000ff">[</div>
<div class="t" style="left:371.19px;top:1053.78px;font-family:'Liberation Mono',monospace;font-weight:400;font-style:normal;font-size:44.5px;line-height:44.5px;color:#808000;transform:scale(1.0000,0.84);transform-origin:0 33.82px;z-index:5;-webkit-text-stroke:1.2px #808000">2</div>
<div class="t" style="left:396.50px;top:1053.78px;font-family:'Liberation Mono',monospace;font-weight:400;font-style:normal;font-size:44.5px;line-height:44.5px;color:#0000ff;transform:scale(1.0000,0.84);transform-origin:0 33.82px;z-index:5;-webkit-text-stroke:1.2px #0000ff">]</div>
<div class="t" style="left:555.42px;top:1053.78px;font-family:'Liberation Mono',monospace;font-weight:400;font-style:normal;font-size:44.5px;line-height:44.5px;color:#0000ff;transform:scale(1.0000,0.84);transform-origin:0 33.82px;z-index:5;-webkit-text-stroke:1.2px #0000ff">:=</div>
<div class="t" style="left:634.28px;top:1053.78px;font-family:'Liberation Mono',monospace;font-weight:400;font-style:normal;font-size:44.5px;line-height:44.5px;color:#000;transform:scale(1.0000,0.84);transform-origin:0 33.82px;z-index:5;-webkit-text-stroke:1.2px #000">iVar</div>
<div class="t" style="left:870.33px;top:1053.78px;font-family:'Liberation Mono',monospace;font-weight:400;font-style:normal;font-size:44.5px;line-height:44.5px;color:#0000ff;transform:scale(1.0000,0.84);transform-origin:0 33.82px;z-index:5;-webkit-text-stroke:1.2px #0000ff">;</div>
<div class="t" style="left:238.48px;top:1109.98px;font-family:'Liberation Mono',monospace;font-weight:400;font-style:normal;font-size:44.5px;line-height:44.5px;color:#000;transform:scale(1.0000,0.84);transform-origin:0 33.82px;z-index:5;-webkit-text-stroke:1.2px #000">erg</div>
<div class="t" style="left:442.62px;top:1109.98px;font-family:'Liberation Mono',monospace;font-weight:400;font-style:normal;font-size:44.5px;line-height:44.5px;color:#0000ff;transform:scale(1.0000,0.84);transform-origin:0 33.82px;z-index:5;-webkit-text-stroke:1.2px #0000ff">:=</div>
<div class="t" style="left:521.88px;top:1109.98px;font-family:'Liberation Mono',monospace;font-weight:400;font-style:normal;font-size:44.5px;line-height:44.5px;color:#000;transform:scale(1.0000,0.84);transform-origin:0 33.82px;z-index:5;-webkit-text-stroke:1.2px #000">fbinst</div>
<div class="t" style="left:679.52px;top:1109.98px;font-family:'Liberation Mono',monospace;font-weight:400;font-style:normal;font-size:44.5px;line-height:44.5px;color:#0000ff;transform:scale(1.0000,0.84);transform-origin:0 33.82px;z-index:5;-webkit-text-stroke:1.2px #0000ff">.</div>
<div class="t" style="left:705.88px;top:1109.98px;font-family:'Liberation Mono',monospace;font-weight:400;font-style:normal;font-size:44.5px;line-height:44.5px;color:#000;transform:scale(1.0000,0.84);transform-origin:0 33.82px;z-index:5;-webkit-text-stroke:1.2px #000">fbout</div>
<div class="t" style="left:959.93px;top:1109.98px;font-family:'Liberation Mono',monospace;font-weight:400;font-style:normal;font-size:44.5px;line-height:44.5px;color:#0000ff;transform:scale(1.0000,0.84);transform-origin:0 33.82px;z-index:5;-webkit-text-stroke:1.2px #0000ff">;</div>
<div class="t" style="left:373.69px;top:878.93px;font-family:'Liberation Sans',sans-serif;font-weight:700;font-style:normal;font-size:45.5px;line-height:45.5px;color:#000;transform:scaleX(0.7424);transform-origin:0 0;z-index:7;">2411</div>
<div class="t" style="left:715.28px;top:878.93px;font-family:'Liberation Sans',sans-serif;font-weight:700;font-style:normal;font-size:45.5px;line-height:45.5px;color:#000;transform:scaleX(0.7454);transform-origin:0 0;z-index:7;">2411</div>
<div class="t" style="left:659.88px;top:992.33px;font-family:'Liberation Sans',sans-serif;font-weight:700;font-style:normal;font-size:45.5px;line-height:45.5px;color:#000;transform:scaleX(0.7495);transform-origin:0 0;z-index:7;">2411</div>
<div class="t" style="left:974.97px;top:992.33px;font-family:'Liberation Sans',sans-serif;font-weight:700;font-style:normal;font-size:45.5px;line-height:45.5px;color:#000;transform:scaleX(0.7556);transform-origin:0 0;z-index:7;">2411</div>
<div class="t" style="left:450.68px;top:1048.92px;font-family:'Liberation Sans',sans-serif;font-weight:700;font-style:normal;font-size:45.5px;line-height:45.5px;color:#000;transform:scaleX(0.7444);transform-origin:0 0;z-index:7;">2411</div>
<div class="t" style="left:765.98px;top:1048.92px;font-family:'Liberation Sans',sans-serif;font-weight:700;font-style:normal;font-size:45.5px;line-height:45.5px;color:#000;transform:scaleX(0.7444);transform-origin:0 0;z-index:7;">2411</div>
<div class="t" style="left:371.29px;top:1105.12px;font-family:'Liberation Sans',sans-serif;font-weight:700;font-style:normal;font-size:45.5px;line-height:45.5px;color:#000;transform:scaleX(0.8277);transform-origin:0 0;z-index:7;">0</div>
<div class="t" style="left:888.49px;top:1105.12px;font-family:'Liberation Sans',sans-serif;font-weight:700;font-style:normal;font-size:45.5px;line-height:45.5px;color:#000;transform:scaleX(0.8277);transform-origin:0 0;z-index:7;">0</div>
<div class="t" style="left:373.05px;top:935.88px;font-family:'Liberation Sans',sans-serif;font-weight:700;font-style:normal;font-size:45.2px;line-height:45.2px;color:#fff;transform:scaleX(0.7822);transform-origin:0 0;z-index:7;">TRUE</div>
<div class="t" style="left:987.80px;top:1105.42px;font-family:'Liberation Sans',sans-serif;font-weight:700;font-style:normal;font-size:45.5px;line-height:45.5px;color:#000;transform:scaleX(0.7865);transform-origin:0 0;z-index:7;">RENVOI</div>
</body></html>
